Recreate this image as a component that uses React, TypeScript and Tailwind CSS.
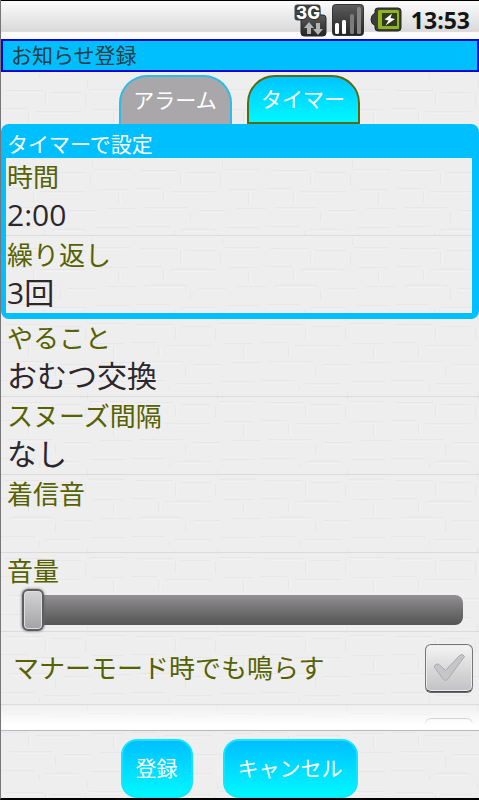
import { useState } from "react"

const LABEL = "block h-[38px] px-[6px] text-[26px] leading-[38px] text-[#566100]"
const VALUE = "block h-[39px] px-[6px] text-[30px] leading-[38px] text-[#2b272c]"

const Texture = () => (
  <svg className="pointer-events-none absolute inset-0 -z-10 h-full w-full" aria-hidden="true">
    <defs>
      <pattern id="brick" width="130" height="78" patternUnits="userSpaceOnUse">
        <rect width="130" height="78" fill="#efeeef" />
        <g stroke="#e8e6e8" strokeWidth="1">
          <path d="M4 12.5h38M50 14.5h30M88 11.5h36M0 30.5h26M34 33.5h46M92 31.5h30M8 49.5h44M62 52.5h28M100 50.5h30M0 68.5h34M44 71.5h36M90 69.5h34" />
          <path d="M44.5 15v12M84.5 16v12M27.5 34v10M112.5 35v11M54.5 54v10M38.5 73v5M86.5 2v7" />
        </g>
        <g stroke="#f3f2f3" strokeWidth="1">
          <path d="M10 14.5h30M90 13.5h30M38 35.5h36M12 51.5h36M64 54.5h24M48 73.5h28" />
          <path d="M46.5 15v12M29.5 34v10M114.5 35v11" />
        </g>
      </pattern>
    </defs>
    <rect width="100%" height="100%" fill="url(#brick)" />
  </svg>
)

const StatusBar = () => (
  <div className="flex h-[39px] shrink-0 items-center justify-end border-t border-black bg-linear-to-b from-[#fafafa] from-5% via-[#d9d9d9] via-80% to-[#fcfcfc] to-82% pr-[9px]">
    <svg width="33" height="34" viewBox="0 0 33 34" className="mr-[5px]" aria-label="3G">
      <defs>
        <linearGradient id="dark" x1="0" y1="0" x2="0" y2="1">
          <stop offset="0" stopColor="#5c5c5c" />
          <stop offset="1" stopColor="#232323" />
        </linearGradient>
      </defs>
      <rect x="0.5" y="1.5" width="26" height="16" rx="3" fill="#444" />
      <rect x="7" y="12" width="25" height="21" rx="3" fill="url(#dark)" stroke="#2a2a2a" />
      <text x="2" y="16" fontSize="17" fontWeight="800" fill="#fff" stroke="#333" strokeWidth="2" paintOrder="stroke" fontFamily="Inter, sans-serif">3G</text>
      <path d="M15 19l5 6h-3v6h-4v-6h-3z" fill="#b4b4b4" />
      <path d="M24 32l-5-6h3v-6h4v6h3z" fill="#b4b4b4" />
    </svg>
    <svg width="32" height="32" viewBox="0 0 32 32" className="mr-[6px]" aria-hidden="true">
      <rect x="0.5" y="0.5" width="31" height="31" rx="3" fill="url(#dark)" stroke="#333" />
      <rect x="3" y="19" width="4" height="11" rx="1.5" fill="#fff" />
      <rect x="10" y="16" width="4" height="14" rx="1.5" fill="#fff" />
      <rect x="18" y="10" width="4" height="20" rx="1.5" fill="#7c7c7c" />
      <rect x="25" y="3" width="4" height="27" rx="1.5" fill="#858585" />
    </svg>
    <svg width="32" height="26" viewBox="0 0 32 26" className="mr-[9px]" aria-hidden="true">
      <path d="M5 6V3.500Q5 1 8 1H28Q31 1 31 4V21Q31 24 28 24H8Q5 24 5 21V18.500Q1 17 1 12.500T5 6z" fill="#3c3c3c" stroke="#262626" />
      <rect x="8" y="3" width="21" height="19" rx="1.5" fill="#8fb51c" />
      <rect x="12" y="6" width="15" height="13" fill="#303a1c" />
      <path d="M22 6.500L14.500 12.500L18.500 13.500L15.500 18.500L25 12L20.500 11z" fill="#fff" />
    </svg>
    <span className="text-[23px] font-bold text-[#141414]">13:53</span>
  </div>
)

const Row = ({ label, value }: { label: string; value?: string }) => (
  <button className="block h-[78px] w-full border-b border-[#dcdadc] text-left last:border-transparent">
    <span className={LABEL}>{label}</span>
    <span className={VALUE}>{value}</span>
  </button>
)

const CheckBox = ({ id, label }: { id: string; label?: string }) => {
  const [on, setOn] = useState(false)
  return (
    <span className="grid shrink-0 place-items-center">
      <input
        id={id}
        type="checkbox"
        aria-label={label}
        checked={on}
        onChange={() => setOn(!on)}
        className="col-start-1 row-start-1 h-12 w-12 appearance-none rounded-md border border-[#77757a] border-b-[#4a484c] bg-linear-to-b from-[#f4f4f4] to-[#c2c1c3] shadow-[inset_0_0_0_1px_#ececec,0_1px_0_#6b696d]"
      />
      <svg width="34" height="30" viewBox="0 0 34 30" className="pointer-events-none col-start-1 row-start-1" aria-hidden="true">
        <path
          d="M2.500 14.500Q1.500 12.500 5 11Q7 10.500 8.500 13L13.500 17.500L27.500 2.500Q31 0 32.500 3.500L15.500 26.500Q13.500 28.500 11.500 26.500z"
          fill={on ? "#7fb800" : "#c6c5c7"}
          stroke="#aaa9ab"
          strokeLinejoin="round"
        />
      </svg>
    </span>
  )
}

const App = () => {
  const [volume, setVolume] = useState(0)

  return (
    <div className="relative isolate flex h-screen flex-col overflow-hidden border-b-2 border-l border-b-black border-l-[#77757a] font-['Open_Sans','Noto_Sans_CJK_JP',sans-serif]">
      <Texture />
      <StatusBar />
      <h1 className="h-[33px] shrink-0 border-2 border-[#0808d0] bg-[#00bfff] px-2 text-[21px] leading-[29px] text-[#263c46]">お知らせ登録</h1>

      <main className="min-h-0 flex-1 overflow-y-auto [scrollbar-width:none]">
        <div className="flex justify-center gap-[15px] pt-[3px] pr-[2px]">
          <button className="h-[49px] w-[113px] rounded-t-[28px] border-2 border-b-0 border-[#2cbce6] bg-[#a9a7a9] text-[21px] text-white">アラーム</button>
          <button className="h-[49px] w-[113px] rounded-t-[28px] border-2 border-[#5a6a10] bg-linear-to-b from-[#00c4ff] to-[#00f8ff] text-[21px] text-white">タイマー</button>
        </div>

        <section className="rounded-lg bg-[#00bfff] pr-[7px] pb-[6px] pl-[5px]">
          <h2 className="h-[34px] px-px pt-[5px] text-[21px] leading-[31px] text-white">タイマーで設定</h2>
          <div className="relative isolate h-[155px] overflow-hidden [&_span]:px-px">
            <Texture />
            <Row label="時間" value="2:00" />
            <Row label="繰り返し" value="3回" />
          </div>
        </section>

        <Row label="やること" value="おむつ交換" />
        <Row label="スヌーズ間隔" value="なし" />
        <Row label="着信音" />

        <div className="-mt-px border-b border-[#dcdadc]">
          <label htmlFor="volume" className={LABEL}>音量</label>
          <div className="-mt-px flex pr-4 pl-[21px]">
            <input
              id="volume"
              type="range"
              value={volume}
              onChange={(e) => setVolume(Number(e.target.value))}
              className="h-[42px] w-full appearance-none bg-transparent [&::-webkit-slider-runnable-track]:h-[30px] [&::-webkit-slider-runnable-track]:rounded-lg [&::-webkit-slider-runnable-track]:bg-linear-to-b [&::-webkit-slider-runnable-track]:from-[#929092] [&::-webkit-slider-runnable-track]:to-[#555455] [&::-webkit-slider-thumb]:-mt-[6px] [&::-webkit-slider-thumb]:h-[42px] [&::-webkit-slider-thumb]:w-[22px] [&::-webkit-slider-thumb]:appearance-none [&::-webkit-slider-thumb]:rounded-md [&::-webkit-slider-thumb]:border-2 [&::-webkit-slider-thumb]:border-[#5f5d60] [&::-webkit-slider-thumb]:bg-linear-to-b [&::-webkit-slider-thumb]:from-[#d4d3d5] [&::-webkit-slider-thumb]:to-[#a3a2a4] [&::-webkit-slider-thumb]:shadow-[inset_0_0_0_1px_#dedede,0_0_3px_#666]"
            />
          </div>
        </div>

        <div className="flex h-[73px] items-center justify-between border-b border-[#dcdadc] pr-[6px] pl-3">
          <label htmlFor="manner" className="text-[26px] leading-[38px] text-[#566100]">マナーモード時でも鳴らす</label>
          <CheckBox id="manner" />
        </div>
        <div className="flex h-[73px] items-center justify-end pr-[6px]">
          <CheckBox id="vibrate" label="バイブレーション" />
        </div>
      </main>

      <footer className="relative flex h-[68px] shrink-0 justify-center gap-[30px] border-t border-[#b9b7b9] pt-2 pr-[2px]">
        <div className="pointer-events-none absolute inset-x-0 bottom-full mb-px h-[26px] bg-linear-to-b from-white/0 to-white to-80%" />
        <button className="h-[59px] rounded-[16px] border-2 border-[#12e6ff] bg-linear-to-b from-[#00bfff] to-[#00f8ff] px-[13px] text-[21px] text-white">登録</button>
        <button className="h-[59px] rounded-[16px] border-2 border-[#12e6ff] bg-linear-to-b from-[#00bfff] to-[#00f8ff] px-[13px] text-[21px] text-white">キャンセル</button>
      </footer>
    </div>
  )
}

export default App
